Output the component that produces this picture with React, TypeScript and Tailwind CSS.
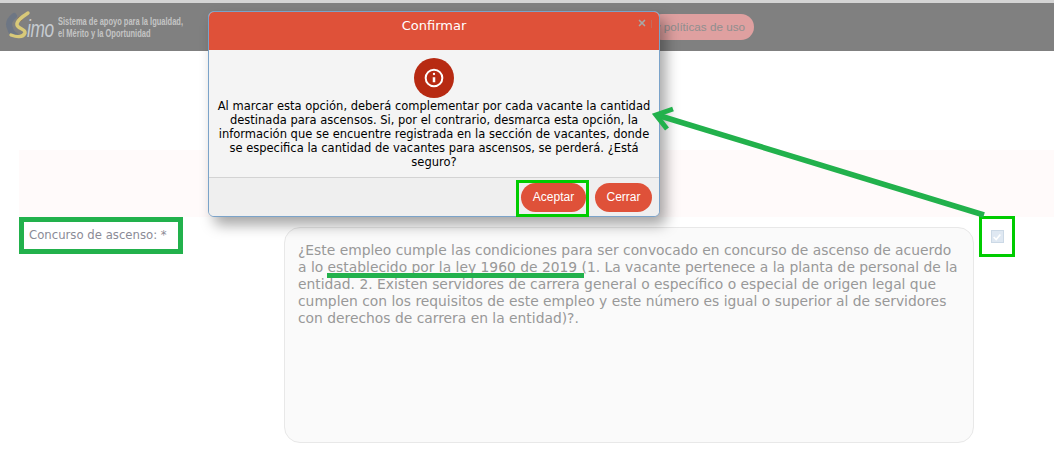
import { X } from "lucide-react";

const verdana = { fontFamily: '"DejaVu Sans", Verdana, sans-serif' };

function Logo() {
  return (
    <div className="flex items-center gap-[1px]">
      <div className="relative h-[34px] w-[52px]">
        <svg viewBox="0 0 52 34" className="absolute inset-0 h-full w-full" fill="none">
          <path d="M9 6C4 10 3 14 5 18C6 22 7 24 10 25" stroke="#6d7684" strokeWidth="6" strokeLinecap="round" />
          <circle cx="15" cy="9" r="2.5" fill="#86705c" />
          <path d="M23 3C17 7 11 11 12 15C13 19 21 19 20 23C18 28 11 27 6 25" stroke="#d8c979" strokeWidth="3.4" strokeLinecap="round" />
        </svg>
        <span className="absolute left-[22px] top-[6px] origin-left font-['Liberation_Sans'] text-[24px] italic leading-[26px] tracking-[-0.5px] text-[#c6cbd0] [transform:scaleX(0.72)]">imo</span>
      </div>
      <p className="mt-[1px] origin-left whitespace-nowrap font-['Liberation_Sans'] text-[10px] font-bold leading-[12px] text-[#c4c4c4] [transform:scaleX(0.75)]">
        Sistema de apoyo para la Igualdad,
        <br />
        el Mérito y la Oportunidad
      </p>
    </div>
  );
}

function Modal() {
  return (
    <div className="absolute left-[208px] top-[11px] z-20 flex h-[206px] w-[452px] flex-col overflow-hidden rounded-[6px] border border-[#7ba3c9] bg-[#f4f4f4] shadow-[6px_8px_14px_rgba(0,0,0,0.35)]">
      <div className="relative flex h-[38px] shrink-0 items-center justify-center bg-[#df5139] pb-[10px] text-[13px] text-white" style={verdana}>
        Confirmar
        <X className="absolute right-[12px] top-[6px] size-[10px] text-[#a8a8a8]" strokeWidth={4} />
        <span className="absolute right-[7px] top-[8px] h-[8px] w-px bg-[#c9695a]" />
      </div>
      <div className="flex flex-1 flex-col items-center px-[6px] pt-[8px]">
        <div className="grid size-[40px] place-items-center rounded-full bg-[#b72a12]">
          <svg viewBox="0 0 24 24" className="size-[20px]" fill="none" stroke="white" strokeWidth="2.4">
            <circle cx="12" cy="12" r="10" />
            <path d="M12 11v6" strokeWidth="3" />
            <circle cx="12" cy="7.2" r="1.4" fill="white" stroke="none" />
          </svg>
        </div>
        <p className="mt-[1px] text-center text-[11.5px] leading-[14px] text-black" style={verdana}>
          Al marcar esta opción, deberá complementar por cada vacante la cantidad destinada para ascensos. Si, por el contrario, desmarca esta opción, la información que se encuentre registrada en la sección de vacantes, donde se especifica la cantidad de vacantes para ascensos, se perderá. ¿Está seguro?
        </p>
      </div>
      <div className="flex h-[39px] shrink-0 items-center justify-end gap-[9px] border-t border-[#d3d3d3] bg-[#efefef] pr-[7px] font-['Liberation_Sans'] text-[12px] text-white">
        <button className="h-[29px] w-[65px] rounded-full bg-[#df5139]">Aceptar</button>
        <button className="h-[29px] w-[57px] rounded-full bg-[#df5139]">Cerrar</button>
      </div>
    </div>
  );
}

export default function App() {
  return (
    <div className="relative h-[454px] w-[1054px] overflow-hidden bg-white">
      <div className="h-[3px] bg-[#d4d4d4]" />
      <header className="flex h-[48px] items-center justify-between bg-[#808080] pl-[5px] pr-[300px]">
        <Logo />
        <span className="flex h-[26px] items-center rounded-full bg-[#dfa0a0] pl-[6px] pr-[9px] font-['Liberation_Sans'] text-[11.7px] text-[#8f8f8f]">y políticas de uso</span>
      </header>

      <main className="pl-[19px]">
        <div className="mt-[99px] h-[67px] bg-[#fffafa]" />
        <div className="flex items-start">
          <div className="flex h-[37px] w-[164px] items-center border-[5px] border-[#22b14c] pl-[5px] text-[11.7px] text-[#8b8b96]" style={verdana}>
            Concurso de ascenso: *
          </div>
          <div className="ml-[101px] mt-[10px] h-[216px] w-[690px] rounded-[16px] border border-[#e8e8e8] bg-[#fafafa] pb-[10px] pl-[13px] pr-[10px] pt-[14px] text-[13.85px] leading-[17px] text-[#989898]" style={verdana}>
            ¿Este empleo cumple las condiciones para ser convocado en concurso de ascenso de acuerdo
            <br />
            a lo establecido por la ley 1960 de 2019 (1. La vacante pertenece a la planta de personal de la entidad. 2. Existen servidores de carrera general o específico o especial de origen legal que cumplen con los requisitos de este empleo y este número es igual o superior al de servidores con derechos de carrera en la entidad)?.
          </div>
          <div className="ml-[5px] mt-[-1px] grid h-[41px] w-[36px] place-items-center border-[3px] border-[#00cc00]">
            <div className="grid size-[13px] place-items-center border border-[#ccd9e6] bg-[#dfe8f2]">
              <svg viewBox="0 0 12 12" className="size-[10px]" fill="none" stroke="white" strokeWidth="2"><path d="M2 6l3 3 5-6" /></svg>
            </div>
          </div>
        </div>
      </main>

      <Modal />

      {/* annotations drawn on top of the capture */}
      <div className="absolute left-[516px] top-[180px] z-30 h-[37px] w-[73px] border-[3px] border-[#00cc00]" />
      <div className="absolute left-[327px] top-[273px] z-30 h-[5px] w-[257px] bg-[#22b14c]" />
      <svg className="absolute left-0 top-0 z-30 h-[454px] w-[1054px]" viewBox="0 0 1054 454" fill="none">
        <path d="M984 215L657 115" stroke="#22b14c" strokeWidth="5.5" />
        <path d="M673 109L656 115L667 129" stroke="#22b14c" strokeWidth="5" />
      </svg>
    </div>
  );
}
